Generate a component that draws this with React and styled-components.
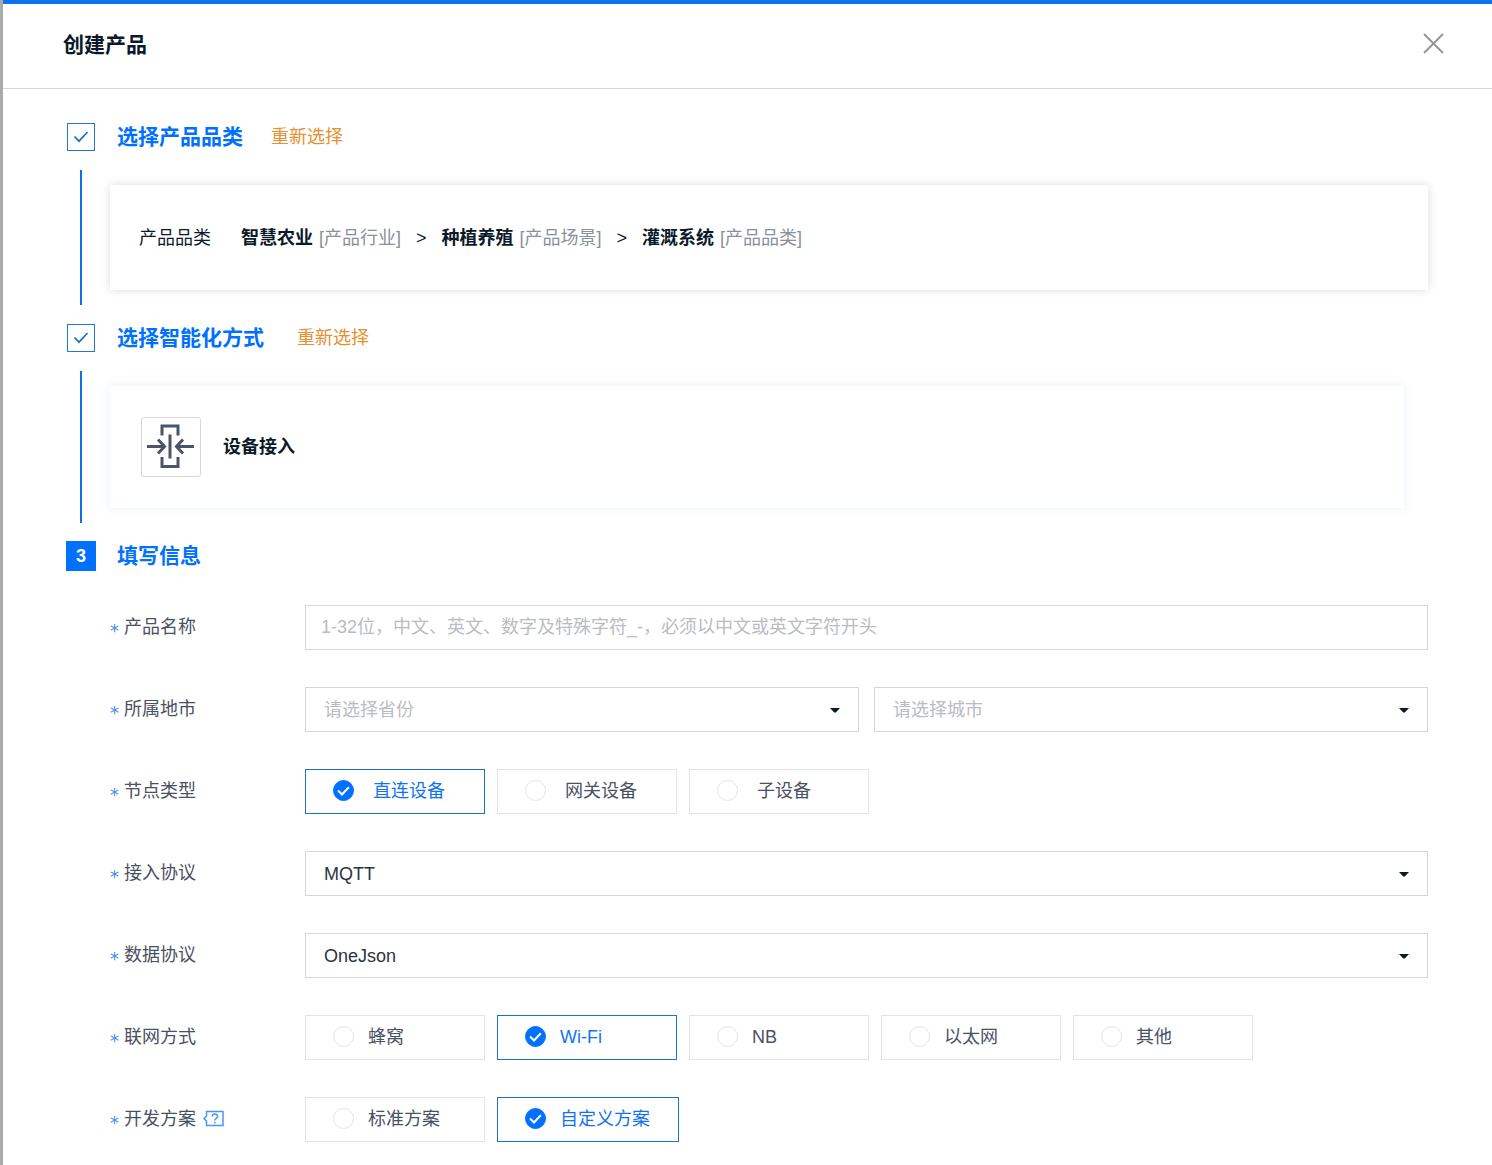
import React, { useState } from "react";
import styled, { createGlobalStyle, css } from "styled-components";

const blue = "#0070ff";
const ink = "#0b1a2a";
const slate = "#495164";

const GlobalStyle = createGlobalStyle`
  *, *::before, *::after { box-sizing: border-box; }
  body {
    margin: 0;
    background: #ababab;
    font-family: "Liberation Sans", "Noto Sans CJK SC", sans-serif;
    font-size: 18px;
    line-height: 24px;
    color: ${ink};
  }
  button, input, select { font: inherit; color: inherit; }
`;

const Drawer = styled.main`
  margin-left: 3px;
  min-height: 100vh;
  background: #fff;
  border-top: 4px solid #0d72ee;
`;

const Header = styled.header`
  display: flex;
  align-items: center;
  justify-content: space-between;
  height: 85px;
  padding: 0 48px 2px 60px;
  border-bottom: 1px solid #d6d8da;
`;

const PageTitle = styled.h1`
  margin: 0;
  font-size: 21px;
  line-height: 30px;
`;

const CloseButton = styled.button`
  display: flex;
  padding: 0 0 4px;
  border: 0;
  background: none;
  color: #929497;
  cursor: pointer;
`;

const Body = styled.div`
  padding: 33px 64px 23px 63px;
`;

const StepHead = styled.div`
  display: flex;
  align-items: center;
  height: 30px;
`;

const StepBadge = styled.span`
  display: flex;
  flex: none;
  align-items: center;
  justify-content: center;
  width: ${(p) => (p.$done ? 28 : 30)}px;
  height: ${(p) => (p.$done ? 28 : 30)}px;
  margin: ${(p) => (p.$done ? "0 22px 0 1px" : "0 21px 0 0")};
  border: ${(p) => (p.$done ? "1px solid #1f77d8" : "0")};
  background: ${(p) => (p.$done ? "#fff" : blue)};
  color: ${(p) => (p.$done ? "#1f6fd0" : "#fff")};
  font-weight: bold;
`;

const StepTitle = styled.h2`
  margin: 0;
  color: ${blue};
  font-size: 21px;
  line-height: 30px;
`;

const Reselect = styled.button`
  margin-left: ${(p) => (p.$wide ? 33 : 28)}px;
  padding: 0;
  border: 0;
  background: none;
  color: #e6902f;
  cursor: pointer;
`;

const StepContent = styled.div`
  display: grid;
  grid-template-columns: 30px 1fr;
  column-gap: 14px;
  margin: 18px 0;
`;

const Rail = styled.span`
  justify-self: center;
  width: 2px;
  background: #0d70e6;
`;

const Card = styled.section`
  display: flex;
  align-items: center;
  margin: 15px 0;
  background: #fff;
  ${(p) =>
    p.$tinted
      ? css`
          height: 122px;
          margin-right: 24px;
          padding: 0 31px;
          gap: 22px;
          box-shadow: 0 0 10px rgba(60, 120, 240, 0.13);
        `
      : css`
          height: 105px;
          padding: 0 29px;
          gap: 30px;
          box-shadow: 0 0 9px rgba(0, 0, 0, 0.14);
        `}
`;

const Trail = styled.div`
  display: flex;
  flex-wrap: wrap;
`;

const Crumb = styled.span`
  & + &::before {
    content: ">";
    margin: 0 15px;
  }
`;

const CrumbKind = styled.span`
  margin-left: 6px;
  color: #8a909c;
`;

const IconTile = styled.span`
  display: flex;
  width: 60px;
  height: 60px;
  border: 1px solid #d5d7da;
  border-radius: 3px;
`;

const Form = styled.form`
  display: grid;
  gap: 37px;
  margin-top: 34px;
  padding-left: 44px;
`;

const Row = styled.div`
  display: grid;
  grid-template-columns: 195px 1fr;
  align-items: center;
  min-height: 45px;
`;

const FieldLabel = styled.label`
  display: flex;
  align-items: center;
  padding-bottom: 2px;
  color: ${slate};
`;

const Star = styled.span`
  width: 14px;
  padding-top: 8px;
  color: #3d8cf5;
  font-family: "DejaVu Sans", sans-serif;
  line-height: 24px;
`;

const HelpButton = styled.button`
  display: flex;
  margin-left: 7px;
  padding: 0;
  border: 0;
  background: none;
  color: #4a95f7;
  cursor: help;
`;

const controlBox = css`
  width: 100%;
  height: 45px;
  border: 1px solid #d3d6da;
  border-radius: 0;
  background: #fff;
  outline: none;
  &:focus-visible {
    border-color: ${blue};
  }
`;

const TextInput = styled.input`
  ${controlBox}
  padding: 0 15px;
  &::placeholder {
    color: #b9bcc2;
    opacity: 1;
  }
`;

const Pair = styled.div`
  display: grid;
  grid-template-columns: 1fr 1fr;
  gap: 15px;
`;

const SelectBox = styled.div`
  display: grid;
  align-items: center;
  & > * {
    grid-area: 1 / 1;
  }
  & > svg {
    justify-self: end;
    margin-right: 19px;
    pointer-events: none;
  }
`;

const NativeSelect = styled.select`
  ${controlBox}
  appearance: none;
  padding: 0 40px 0 18px;
  color: ${(p) => (p.$empty ? "#b9bcc2" : "#2b3340")};
`;

const Options = styled.div`
  display: flex;
  flex-wrap: wrap;
  gap: 12px;
`;

const Option = styled.label`
  display: flex;
  align-items: center;
  gap: ${(p) => (p.$roomy ? 19 : 14)}px;
  min-width: 180px;
  height: 45px;
  padding: 0 28px 2px 27px;
  border: 1px solid ${(p) => (p.$on ? "#1a75c4" : "#e3e4e8")};
  color: ${(p) => (p.$on ? "#1273f0" : slate)};
  cursor: pointer;
`;

const RadioMark = styled.span`
  display: grid;
  & > * {
    grid-area: 1 / 1;
  }
  & > svg {
    pointer-events: none;
  }
`;

const Radio = styled.input`
  appearance: none;
  width: 21px;
  height: 21px;
  margin: 0;
  border: 1px solid #e2e3e6;
  border-radius: 50%;
  &:checked {
    border-color: ${blue};
    background: ${blue};
  }
`;

function CloseIcon() {
  return (
    <svg width="21" height="21" viewBox="0 0 21 21" fill="none" stroke="currentColor" strokeWidth="1.8">
      <path d="M1 1l19 19M20 1L1 20" />
    </svg>
  );
}

function DoneIcon() {
  return (
    <svg width="16" height="14" viewBox="0 0 16 14" fill="none" stroke="currentColor" strokeWidth="1.7">
      <path d="M1.500 6.500l4.500 4.700L14.500 2" />
    </svg>
  );
}

function CaretIcon() {
  return (
    <svg width="10" height="6" viewBox="0 0 10 6" fill={ink}>
      <path d="M0 1h10L6 5.300a1.500 1.500 0 0 1-2 0z" />
    </svg>
  );
}

function AccessIcon() {
  return (
    <svg width="58" height="58" viewBox="0 0 58 58" fill="none" stroke="#4a5568" strokeWidth="3">
      <path d="M20 17.500V8h16v9.500M20 39v9.500h16V39M28 16.500v24" />
      <path d="M5 28.500h17M16 21.500l6.500 7-6.500 7M52 28.500H35M41 21.500l-6.500 7 6.500 7" />
    </svg>
  );
}

function HelpIcon() {
  return (
    <svg width="21" height="17" viewBox="0 0 21 17" fill="none" stroke="currentColor" strokeWidth="1.500">
      <path d="M3.500 1.500H20v14H3.500V11L1 8.500 3.500 6z" />
      <path d="M9.200 6.500c0-3.500 5.400-3.500 5.400 0 0 1.900-2.700 1.900-2.700 4M11.900 11.700v1.700" />
    </svg>
  );
}

function TickIcon() {
  return (
    <svg width="21" height="21" viewBox="0 0 21 21" fill="none" stroke="#fff" strokeWidth="2">
      <path d="M5 10.500l4 4 6.800-7.300" />
    </svg>
  );
}

function Label({ id, htmlFor, as, text, children }) {
  return (
    <FieldLabel id={id} htmlFor={htmlFor} as={as}>
      <Star>*</Star>
      {text}
      {children}
    </FieldLabel>
  );
}

function Select({ id, label, value, choices, placeholder }) {
  const [current, setCurrent] = useState(value || "");
  return (
    <SelectBox>
      <NativeSelect
        id={id}
        aria-label={label}
        value={current}
        $empty={!current}
        onChange={(e) => setCurrent(e.target.value)}
      >
        {placeholder && <option value="">{placeholder}</option>}
        {choices.map((c) => (
          <option key={c} value={c}>{c}</option>
        ))}
      </NativeSelect>
      <CaretIcon />
    </SelectBox>
  );
}

function RadioRow({ name, text, choices, initial, roomy, help }) {
  const [current, setCurrent] = useState(initial);
  const labelId = `${name}-label`;
  return (
    <Row>
      <Label id={labelId} as="span" text={text}>{help}</Label>
      <Options role="radiogroup" aria-labelledby={labelId}>
        {choices.map((c) => (
          <Option key={c} $on={c === current} $roomy={roomy}>
            <RadioMark>
              <Radio type="radio" name={name} checked={c === current} onChange={() => setCurrent(c)} />
              {c === current && <TickIcon />}
            </RadioMark>
            {c}
          </Option>
        ))}
      </Options>
    </Row>
  );
}

const crumbs = [
  ["智慧农业", "[产品行业]"],
  ["种植养殖", "[产品场景]"],
  ["灌溉系统", "[产品品类]"],
];

export default function App() {
  return (
    <>
      <GlobalStyle />
      <Drawer>
        <Header>
          <PageTitle>创建产品</PageTitle>
          <CloseButton type="button" aria-label="关闭"><CloseIcon /></CloseButton>
        </Header>
        <Body>
          <StepHead>
            <StepBadge $done><DoneIcon /></StepBadge>
            <StepTitle>选择产品品类</StepTitle>
            <Reselect type="button">重新选择</Reselect>
          </StepHead>
          <StepContent>
            <Rail />
            <Card>
              <span>产品品类</span>
              <Trail>
                {crumbs.map(([name, kind]) => (
                  <Crumb key={name}>
                    <strong>{name}</strong>
                    <CrumbKind>{kind}</CrumbKind>
                  </Crumb>
                ))}
              </Trail>
            </Card>
          </StepContent>

          <StepHead>
            <StepBadge $done><DoneIcon /></StepBadge>
            <StepTitle>选择智能化方式</StepTitle>
            <Reselect type="button" $wide>重新选择</Reselect>
          </StepHead>
          <StepContent>
            <Rail />
            <Card $tinted>
              <IconTile><AccessIcon /></IconTile>
              <strong>设备接入</strong>
            </Card>
          </StepContent>

          <StepHead>
            <StepBadge>3</StepBadge>
            <StepTitle>填写信息</StepTitle>
          </StepHead>
          <Form onSubmit={(e) => e.preventDefault()}>
            <Row>
              <Label htmlFor="product-name" text="产品名称" />
              <TextInput
                id="product-name"
                type="text"
                maxLength={32}
                placeholder="1-32位，中文、英文、数字及特殊字符_-，必须以中文或英文字符开头"
              />
            </Row>
            <Row>
              <Label htmlFor="province" text="所属地市" />
              <Pair>
                <Select id="province" placeholder="请选择省份" choices={[]} />
                <Select id="city" label="城市" placeholder="请选择城市" choices={[]} />
              </Pair>
            </Row>
            <RadioRow name="node" text="节点类型" roomy initial="直连设备" choices={["直连设备", "网关设备", "子设备"]} />
            <Row>
              <Label htmlFor="access" text="接入协议" />
              <Select id="access" value="MQTT" choices={["MQTT"]} />
            </Row>
            <Row>
              <Label htmlFor="data" text="数据协议" />
              <Select id="data" value="OneJson" choices={["OneJson"]} />
            </Row>
            <RadioRow name="network" text="联网方式" initial="Wi-Fi" choices={["蜂窝", "Wi-Fi", "NB", "以太网", "其他"]} />
            <RadioRow
              name="plan"
              text="开发方案"
              initial="自定义方案"
              choices={["标准方案", "自定义方案"]}
              help={<HelpButton type="button" aria-label="帮助"><HelpIcon /></HelpButton>}
            />
          </Form>
        </Body>
      </Drawer>
    </>
  );
}
